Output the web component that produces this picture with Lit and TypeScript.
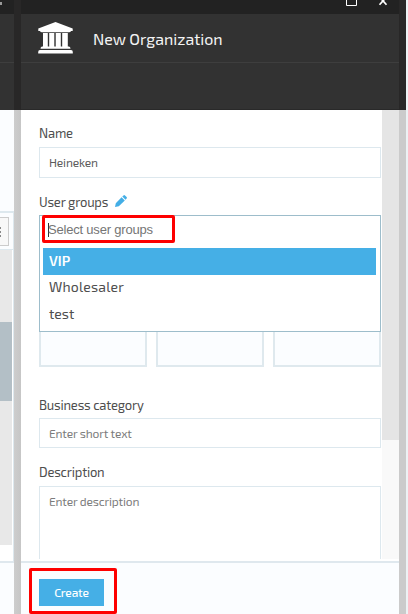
import { LitElement, html, css, svg } from "lit";
import { customElement } from "lit/decorators.js";

const bank = svg`
  <path d="M17.5 0 L34.7 6.4 V9 H33 Q32.6 10.2 31 10.2 H4 Q2.4 10.2 2 9 H.3 V6.4Z"/>
  <path d="M5 11H9.8V24.5H11.3V11H16.3V24.5H17.8V11H22.8V24.5H24.3V11H29.8V24.5H31Q32.5 24.8 32.5 26.8H2.5Q2.5 24.8 4 24.5H5Z"/>
  <path d="M11.3 11H12V24.5H11.3ZM17.8 11H18.5V24.5H17.8ZM24.3 11H25V24.5H24.3Z" opacity=".5"/>
  <path d="M2 28H33Q34.8 28 34.8 30V31.6H.2V30Q.2 28 2 28Z"/>`;

@customElement("app-root")
export class AppRoot extends LitElement {
  static styles = css`
    :host {
      display: flex;
      position: relative;
      width: 408px;
      height: 614px;
      overflow: hidden;
      background: #fff;
      color: #4e4e4e;
      font: 13px/16px "Exo 2", "Noto Sans", sans-serif;
    }
    * { box-sizing: border-box; }
    .prev { width: 14px; display: flex; flex-direction: column; flex: none; }
    .dark { height: 110px; background: #323232; border-top: 14px solid #222; flex: none; overflow: hidden; }
    .dark i { display: block; height: 49px; border-bottom: 1px solid #3e3e3e; }
    .corner { position: absolute; left: 0; top: 2px; width: 2px; height: 3px; background: #999; }
    .prev .blank { height: 103px; background: #fbfdff; border-bottom: 2px solid #dde8ee; }
    .prev .tools { height: 37px; background: #fbfdff; border: solid #dde8ee; border-width: 0 1px 1px 0; padding-top: 4px; }
    .more { width: 9px; height: 29px; border: 1px solid #ccc; border-left: 0; background: #f8f8f8; display: flex; flex-direction: column; gap: 2px; padding-top: 9px; }
    .more i { width: 1px; height: 2px; background: #888; }
    .rows { height: 311px; border-right: 1px solid #dde8ee; }
    .rows div { width: 12px; height: 295px; background: #e8e8e8; padding-top: 72px; }
    .rows i { display: block; height: 79px; background: #b3bfc6; }
    .foot { height: 53px; border-top: 2px solid #dfe8ee; background: #fbfdff; flex: none; }
    .strip { width: 7px; flex: none; background: #cbcbcb; border-top: 110px solid #282727; }
    .strip.near { background: linear-gradient(90deg, #cdcdcd, #c6c6c6); }
    .edge { width: 2px; background: #edf2f4; }
    .blade { width: 378px; flex: none; display: flex; flex-direction: column; }
    .top { height: 14px; background: #222; display: flex; justify-content: flex-end; flex: none; }
    .top svg { width: 60px; height: 14px; }
    .title { height: 49px; background: #323232; border-bottom: 1px solid #3e3e3e; display: flex; align-items: flex-start; padding: 8px 0 0 17px; color: #f4f4f4; flex: none; }
    .title svg { width: 35px; height: 32px; fill: #fff; margin-right: 20px; }
    .title span { font-size: 16px; line-height: 24px; padding-top: 5px; }
    .band { height: 47px; background: #323232; border-bottom: 1px solid #292929; flex: none; }
    .body { height: 451px; display: flex; }
    .form { width: 361px; padding: 15px 1px 0 18px; height: 449px; overflow: hidden; flex: none; }
    .scroll { width: 17px; height: 449px; background: #f9f9f9; }
    .scroll i { display: block; height: 330px; background: #e5e5e5; }
    .label { height: 16px; display: flex; align-items: center; white-space: nowrap; letter-spacing: -0.2px; }
    .label svg { width: 12px; height: 12px; margin: -2px 0 0 7px; fill: #43aee6; }
    .field { height: 31px; margin: 6px 0 16px; border: 1px solid #dde8ee; padding: 6px 9px; font-size: 12px; white-space: nowrap; letter-spacing: -0.18px; color: #5c5c5c; }
    .field.hint { color: #7c7c7c; }
    .groups { height: 187px; position: relative; }
    .menu { position: absolute; left: 0; top: 5px; width: 342px; height: 117px; border: 1px solid #9dbdcb; background: #fff; padding: 4px 4px 4px 3px; z-index: 1; }
    .search { height: 28px; padding: 2px 0 0 5px; font: 13px/16px "Liberation Sans", Arial, sans-serif; letter-spacing: -0.2px; color: #757575; white-space: nowrap; display: flex; }
    .search i { width: 1px; height: 14px; background: #333; margin: 1px 0 0 0; }
    .search span { margin-left: -1px; }
    .option { height: 27px; width: 333px; padding: 0 6px; font-size: 14px; line-height: 25px; }
    .option.on { background: #45afe6; color: #fff; font-weight: 600; }
    .option.next { height: 26px; line-height: 23px; letter-spacing: 0.2px; }
    .tiles { display: flex; gap: 9px; padding-top: 110px; }
    .tiles i { width: 108px; height: 47px; border: 2px solid #dfe9ee; background: #fbfdff; }
    .short { height: 30px; margin-top: 5px; }
    .area { height: 100px; margin-top: 6px; margin-bottom: 0; }
    .blade .foot { padding: 16px 18px 0; }
    .create { width: 65px; height: 27px; background: #45afe6; color: #fff; font-size: 12px; line-height: 27px; text-align: center; font-weight: 500; letter-spacing: -0.2px; }
    .mark { position: absolute; border: 3px solid #fe0000; border-radius: 2px; z-index: 2; }
    .mark.a { left: 42px; top: 215px; width: 133px; height: 28px; }
    .mark.b { left: 29px; top: 568px; width: 88px; height: 46px; }
  `;

  render() {
    return html`
      <div class="prev">
        <div class="dark"><i></i></div>
        <div class="blank"></div>
        <div class="tools"><div class="more"><i></i><i></i><i></i></div></div>
        <div class="rows"><div><i></i></div></div>
        <div class="foot"></div>
      </div>
      <i class="corner"></i>
      <div class="strip near"></div>
      <div class="blade">
        <div class="top">
          <svg viewBox="0 0 60 14" fill="none" stroke="#fff">
            <path d="M7.5 -4V5.5H17.5V-4" />
            <path d="M40.5 -3L47.5 4.8M47.5 -3L40.5 4.8" stroke-width="1.7" />
          </svg>
        </div>
        <div class="title">
          <svg viewBox="0 0 35 32">${bank}</svg>
          <span>New Organization</span>
        </div>
        <div class="band"></div>
        <div class="body">
          <div class="form">
            <div class="label">Name</div>
            <div class="field">Heineken</div>
            <div class="label">
              <span>User groups</span>
              <svg viewBox="0 0 12 12">
                <path d="M0 12L.8 8.2L6.6 2.2L9.8 5.4L3.8 11.2ZM7.3 1.5L8.5.4Q9.3 -.2 10 .4L11.6 2Q12.2 2.7 11.6 3.5L10.5 4.7Z" />
              </svg>
            </div>
            <div class="groups">
              <div class="menu">
                <div class="search"><i></i><span>Select user groups</span></div>
                <div class="option on">VIP</div>
                <div class="option next">Wholesaler</div>
                <div class="option">test</div>
              </div>
              <div class="tiles"><i></i><i></i><i></i></div>
            </div>
            <div class="label">Business category</div>
            <div class="field hint short">Enter short text</div>
            <div class="label">Description</div>
            <div class="field hint area">Enter description</div>
          </div>
          <div class="scroll"><i></i></div>
        </div>
        <div class="foot"><div class="create">Create</div></div>
      </div>
      <div class="strip"></div>
      <div class="edge"></div>
      <div class="mark a"></div>
      <div class="mark b"></div>
    `;
  }
}
